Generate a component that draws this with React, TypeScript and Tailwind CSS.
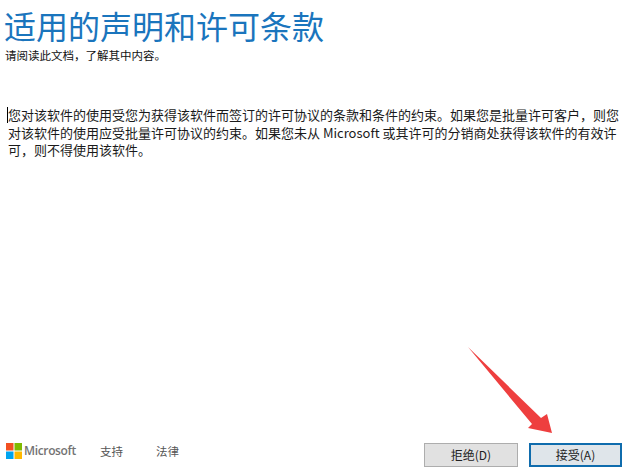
const cjk = { fontFamily: '"Noto Sans CJK SC", "Liberation Sans", sans-serif' };

export default function App() {
  return (
    <div className="relative w-[630px] h-[468px] bg-white overflow-hidden flex flex-col" style={cjk}>
      <h1 className="pl-[4px] pt-[3px] h-[47px] text-[32px] leading-[44px] font-normal text-[#1a75bd] whitespace-nowrap">
        适用的声明和许可条款
      </h1>
      <p className="pl-[5px] text-[11.5px] leading-[16px] text-[#111]">请阅读此文档，了解其中内容。</p>

      <div className="mt-[43px] pl-[8px] pr-[8px] flex-1 text-[13px] leading-[17.5px] text-[#1a1a1a] relative">
        <span className="absolute left-[7px] top-[1px] w-px h-[16px] bg-black" />
        您对该软件的使用受您为获得该软件而签订的许可协议的条款和条件的约束。如果您是批量许可客户，则您对该软件的使用应受批量许可协议的约束。如果您未从 Microsoft 或其许可的分销商处获得该软件的有效许可，则不得使用该软件。
      </div>

      <div className="flex items-center pl-[6px] pr-[8px] pb-[1px] h-[26px]">
        <svg width="16" height="16" viewBox="0 0 16 16" className="shrink-0 -mt-[8px]">
          <rect x="0" y="0" width="7.5" height="7.5" fill="#f25022" />
          <rect x="8.5" y="0" width="7.5" height="7.5" fill="#7fba00" />
          <rect x="0" y="8.5" width="7.5" height="7.5" fill="#00a4ef" />
          <rect x="8.5" y="8.5" width="7.5" height="7.5" fill="#ffb900" />
        </svg>
        <span className="ml-[2px] -mt-[8px] text-[12px] font-semibold tracking-[-0.35px] text-[#737373]" style={{ fontFamily: '"Open Sans", sans-serif' }}>
          Microsoft
        </span>
        <span className="ml-[24px] -mt-[6px] text-[11.5px] text-[#555]">支持</span>
        <span className="ml-[33px] -mt-[6px] text-[11.5px] text-[#555]">法律</span>
        <div className="ml-auto flex gap-[11px]">
          <button className="w-[94px] h-[24px] bg-[#e1e1e1] border border-[#adadad] text-[12px] text-[#222]">拒绝(D)</button>
          <button className="w-[93px] h-[24px] bg-[#dfe5ea] border-2 border-[#0f6cad] text-[12px] text-[#222]">接受(A)</button>
        </div>
      </div>

      {/* red arrow drawn over the page */}
      <svg className="absolute left-[460px] top-[340px]" width="100" height="105" viewBox="0 0 100 105">
        <path d="M8 7 L72 84 L68 88 L92 93 L87 74 L81 78 Z" fill="#ee3f3f" />
      </svg>
    </div>
  );
}
